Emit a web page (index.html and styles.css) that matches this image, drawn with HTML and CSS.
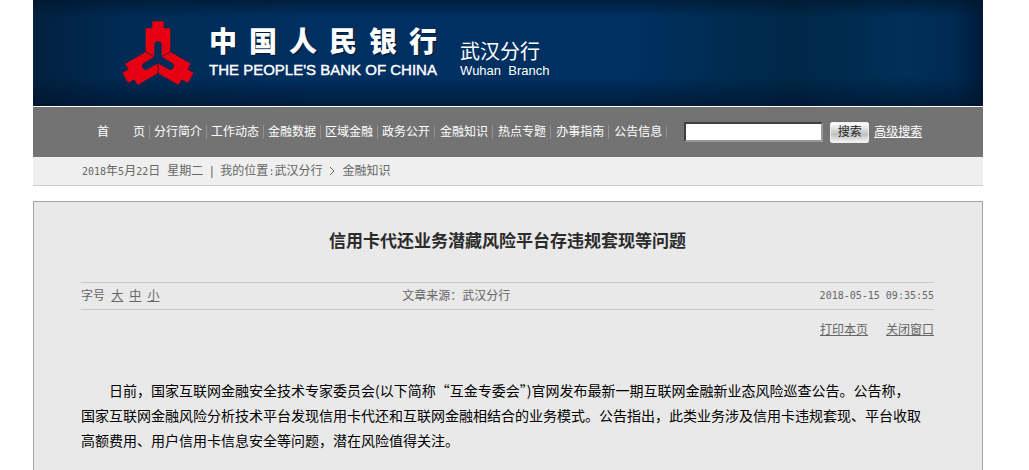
FILE: index.html
```html
<!DOCTYPE html>
<html lang="zh-CN">
<head>
    <meta charset="UTF-8">
    <meta name="viewport" content="width=device-width, initial-scale=1.0">
    <title>信用卡代还业务潜藏风险平台存违规套现等问题</title>
    <link rel="stylesheet" href="styles.css">
</head>
<body>
    <div class="page">
        <header class="banner">
            <svg class="logo" viewBox="-36 -39 72 66" aria-hidden="true">
                <defs>
                    <path id="arm" d="M-6 -38H6V-31H12.5V-7.2L3.5 -2V-14Q3.5 -17.5 0 -17.5Q-3.5 -17.5 -3.5 -14V-2L-12.5 -7.2V-31H-6Z"/>
                </defs>
                <g fill="#e60012" stroke="#06264a" stroke-width="0.5">
                    <use href="#arm"/>
                    <use href="#arm" transform="rotate(120)"/>
                    <use href="#arm" transform="rotate(240)"/>
                </g>
            </svg>
            <div class="bank">
                <div class="bank-cn"><span>中</span><span>国</span><span>人</span><span>民</span><span>银</span><span>行</span></div>
                <div class="bank-en">THE PEOPLE'S BANK OF CHINA</div>
            </div>
            <div class="branch">
                <div class="branch-cn">武汉分行</div>
                <div class="branch-en">Wuhan&nbsp; Branch</div>
            </div>
        </header>

        <div class="topbar">
            <nav>
                <ul class="menu">
                    <li><a href="#">首　　页</a></li>
                    <li><a href="#">分行简介</a></li>
                    <li><a href="#">工作动态</a></li>
                    <li><a href="#">金融数据</a></li>
                    <li><a href="#">区域金融</a></li>
                    <li><a href="#">政务公开</a></li>
                    <li><a href="#">金融知识</a></li>
                    <li><a href="#">热点专题</a></li>
                    <li><a href="#">办事指南</a></li>
                    <li><a href="#">公告信息</a></li>
                </ul>
            </nav>
            <form class="search">
                <input type="text" class="search-text" aria-label="搜索">
                <button type="submit" class="search-btn">搜索</button>
                <a href="#" class="advanced">高级搜索</a>
            </form>
        </div>

        <div class="crumbs">
            <span><span class="num">2018</span>年<span class="num">5</span>月<span class="num">22</span>日</span>
            <span>星期二</span>
            <span class="bar">|</span>
            <span>我的位置<span class="num">:</span><a href="#">武汉分行</a></span>
            <svg class="arrow" viewBox="0 0 6 10" aria-hidden="true"><path d="M1 1L5 5L1 9" fill="none" stroke="#666"/></svg>
            <a href="#">金融知识</a>
        </div>

        <main class="article">
            <h1>信用卡代还业务潜藏风险平台存违规套现等问题</h1>
            <div class="info">
                <div class="sizes">字号 <a href="#">大</a><a href="#">中</a><a href="#">小</a></div>
                <div class="source">文章来源：武汉分行</div>
                <div class="time num">2018-05-15 09:35:55</div>
            </div>
            <div class="tools">
                <a href="#">打印本页</a>
                <a href="#">关闭窗口</a>
            </div>
            <p class="content">日前，国家互联网金融安全技术专家委员会(以下简称“互金专委会”)官网发布最新一期互联网金融新业态风险巡查公告。公告称，国家互联网金融风险分析技术平台发现信用卡代还和互联网金融相结合的业务模式。公告指出，此类业务涉及信用卡违规套现、平台收取高额费用、用户信用卡信息安全等问题，潜在风险值得关注。</p>
        </main>
    </div>
</body>
</html>
```
FILE: styles.css
```css
* {
    box-sizing: border-box;
}

html {
    height: 100%;
}

body {
    display: flex;
    min-height: 100%;
    margin: 0;
    padding-right: 13px;
    background: #fff;
    color: #666;
    font: 12px/18px "Liberation Sans", "Noto Sans CJK SC", sans-serif;
}

a {
    color: inherit;
}

.page {
    display: flex;
    flex-direction: column;
    width: 100%;
    max-width: 950px;
    margin: 0 auto;
}

.num {
    font-family: "DejaVu Sans Mono", monospace;
    font-size: 10px;
}

/* banner */
.banner {
    display: flex;
    align-items: flex-start;
    height: 106px;
    padding: 20px 0 0 89px;
    color: #fff;
    background:
        linear-gradient(to bottom, rgba(0, 20, 40, 0.6), transparent 16%, transparent 72%, rgba(0, 20, 44, 0.7)),
        linear-gradient(to right, #02203f, #002b55 10%, #003061 30%, #003061 63%, #002b4f 74%, #002848 80%, #002f58 92%, #002a52 97%, #001a38);
}

.logo {
    width: 72px;
    height: 66px;
}

.bank {
    margin-left: 15px;
}

.bank-cn {
    display: flex;
    gap: 12px;
    padding-top: 5px;
    font-size: 28px;
    font-weight: 900;
    line-height: 36px;
    text-shadow: 1px 1px 1px #001a38;
}

.bank-en {
    font-size: 15px;
    line-height: 18px;
    -webkit-text-stroke: 0.4px #fff;
}

.branch {
    margin-left: 23px;
    padding-top: 20px;
}

.branch-cn {
    font-size: 20px;
    line-height: 24px;
}

.branch-en {
    font-size: 13px;
    line-height: 14px;
}

/* menu and search */
.topbar {
    display: flex;
    align-items: center;
    height: 50px;
    margin-top: 1px;
    padding-left: 60px;
    background: #737373;
    color: #fff;
}

.menu {
    display: flex;
    margin: 0;
    padding: 0;
    list-style: none;
}

.menu li {
    padding: 0 4px;
    border-right: 1px solid #929292;
    line-height: 14px;
    white-space: nowrap;
}

.menu li:nth-child(n+7) {
    padding-left: 5px;
}

.menu a {
    text-decoration: none;
}

.search {
    display: flex;
    align-items: center;
    margin-left: 17px;
}

.search-text {
    width: 139px;
    height: 20px;
    padding: 0 4px;
    border: 2px solid;
    border-color: #404040 #999 #999 #404040;
    background: #fff;
}

.search-btn {
    width: 39px;
    height: 21px;
    margin: 0 5px 0 7px;
    padding: 0;
    border: 1px solid #eee;
    border-radius: 2px;
    background: linear-gradient(#fff, #ccc 50%, #c0c0c0 60%, #f2f2f2);
    color: #222;
    font: inherit;
}

.advanced {
    white-space: nowrap;
}

/* position bar */
.crumbs {
    display: flex;
    align-items: center;
    gap: 7px;
    height: 29px;
    padding-left: 49px;
    border-bottom: 1px solid #ccc;
    background: #efefef;
}

.crumbs a {
    text-decoration: none;
}

.arrow {
    width: 6px;
    height: 10px;
}

/* article */
.article {
    flex: 1;
    margin-top: 15px;
    padding: 0 48px 16px 47px;
    border: 1px solid #a0a4a4;
    border-bottom: 0;
    background: #e9e9e9;
}

h1 {
    margin: 27px 0;
    color: #2b2b2b;
    font-size: 17px;
    line-height: 26px;
    text-align: center;
}

.info {
    display: grid;
    grid-template-columns: 1fr 1fr 1fr;
    border-top: 1px solid #c8c8c8;
    border-bottom: 1px solid #c8c8c8;
    line-height: 26px;
}

.sizes a {
    margin: 0 3px;
}

.source {
    padding-left: 37px;
}

.time {
    text-align: right;
}

.tools {
    display: flex;
    justify-content: flex-end;
    gap: 18px;
    margin-top: 11px;
}

.content {
    margin: 39px 0 0;
    padding-right: 12px;
    color: #000;
    font-family: "Noto Sans CJK SC", sans-serif;
    font-size: 14px;
    line-height: 25px;
    text-indent: 28px;
}
```
